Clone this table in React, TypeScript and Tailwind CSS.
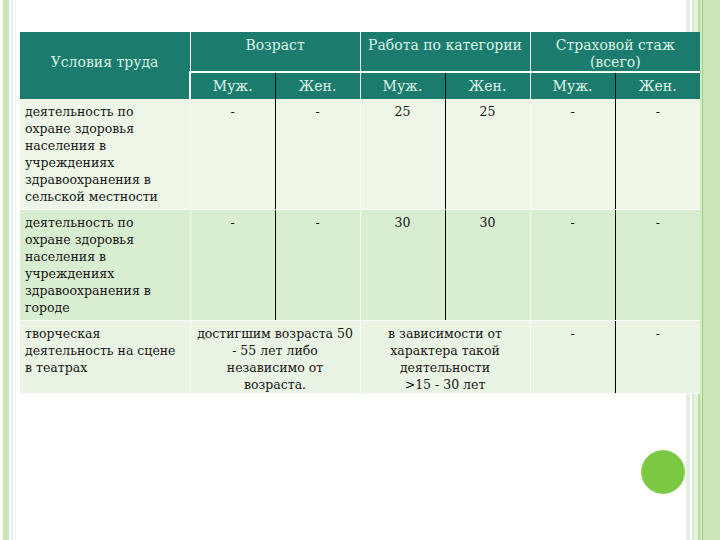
import React from "react";

const HEAD = "bg-[#1b7b6d] text-[#dcf3e8] font-normal";
const BODY_TEXT = "text-[12.5px] leading-[17px] text-[#161616]";

interface Row {
    label: string[];
    bg: string;
    cells: React.ReactNode;
}

function Dash() {
    return <span>-</span>;
}

// Value cell: top aligned, centred, thin light border on the left.
function V({ children, black = false, span = 1 }: { children: React.ReactNode; black?: boolean; span?: number }) {
    return (
        <td
            colSpan={span}
            className={
                "align-top text-center px-1 pt-[4px] border-b border-b-white/80 " +
                (black ? "border-l border-l-black" : "border-l border-l-white/80")
            }
        >
            {children}
        </td>
    );
}

const rows: Row[] = [
    {
        label: [
            "деятельность по",
            "охране здоровья",
            "населения в",
            "учреждениях",
            "здравоохранения в",
            "сельской местности",
        ],
        bg: "bg-[#eef6e8]",
        cells: (
            <>
                <V><Dash /></V>
                <V black><Dash /></V>
                <V>25</V>
                <V black>25</V>
                <V><Dash /></V>
                <V black><Dash /></V>
            </>
        ),
    },
    {
        label: [
            "деятельность по",
            "охране здоровья",
            "населения в",
            "учреждениях",
            "здравоохранения в",
            "городе",
        ],
        bg: "bg-[#d9edd0]",
        cells: (
            <>
                <V><Dash /></V>
                <V black><Dash /></V>
                <V>30</V>
                <V black>30</V>
                <V><Dash /></V>
                <V black><Dash /></V>
            </>
        ),
    },
    {
        label: ["творческая", "деятельность на сцене", "в театрах"],
        bg: "bg-[#eaf4e4]",
        cells: (
            <>
                <V span={2}>
                    достигшим возраста 50
                    <br />- 55 лет либо
                    <br />
                    независимо от
                    <br />
                    возраста.
                </V>
                <V span={2}>
                    в зависимости от
                    <br />
                    характера такой
                    <br />
                    деятельности
                    <br />
                    &gt;15 - 30 лет
                </V>
                <V><Dash /></V>
                <V black><Dash /></V>
            </>
        ),
    },
];

export default function App() {
    return (
        <div className="relative w-[720px] h-[540px] overflow-hidden pt-[32px] pl-[20px] font-['DejaVu_Serif',serif] bg-[linear-gradient(to_right,#fff_0px,#fff_3px,#cbe4b6_3px,#cbe4b6_9px,#fff_9px,#fff_11px,#def3f6_11px,#def3f6_13px,#fff_13px,#fff_15px,#fbeedd_15px,#fbeedd_16px,#fff_16px,#fff_686px,#e3efdf_686px,#e3efdf_690px,#fff_690px,#fff_692px,#d9ebd1_692px,#d9ebd1_694px,#e4f1de_694px,#e4f1de_698px,#b9dca4_698px,#b9dca4_700px,#d4eac8_700px,#d4eac8_702px,#9ccf7c_702px,#9ccf7c_703px,#cce6bc_703px,#cce6bc_720px)]">
            <table className="table-fixed border-collapse w-[680px]">
                <colgroup>
                    <col className="w-[170px]" />
                    <col className="w-[85px]" />
                    <col className="w-[85px]" />
                    <col className="w-[85px]" />
                    <col className="w-[85px]" />
                    <col className="w-[85px]" />
                    <col className="w-[85px]" />
                </colgroup>
                <thead className="text-[14px] leading-[17px]">
                    <tr className="h-[40px]">
                        <th rowSpan={2} className={HEAD + " align-middle text-center pb-[6px]"}>
                            Условия труда
                        </th>
                        <th colSpan={2} className={HEAD + " align-top pt-[5px] border-l border-l-white border-b-2 border-b-white"}>
                            Возраст
                        </th>
                        <th colSpan={2} className={HEAD + " align-top pt-[5px] border-l border-l-white border-b-2 border-b-white"}>
                            Работа по категории
                        </th>
                        <th colSpan={2} className={HEAD + " align-top pt-[5px] border-l border-l-white border-b-2 border-b-white"}>
                            Страховой стаж
                            <br />
                            (всего)
                        </th>
                    </tr>
                    <tr className="h-[27px]">
                        <th className={HEAD + " border-l-2 border-l-white"}>Муж.</th>
                        <th className={HEAD + " border-l border-l-black"}>Жен.</th>
                        <th className={HEAD + " border-l border-l-white"}>Муж.</th>
                        <th className={HEAD + " border-l border-l-black"}>Жен.</th>
                        <th className={HEAD + " border-l border-l-white"}>Муж.</th>
                        <th className={HEAD + " border-l border-l-black"}>Жен.</th>
                    </tr>
                </thead>
                <tbody className={BODY_TEXT}>
                    {rows.map((r, i) => (
                        <tr key={i} className={r.bg}>
                            <td className="align-top text-left pl-[5px] pt-[4px] pb-[4px] border-b border-b-white/80">
                                {r.label.map((l, j) => (
                                    <div key={j} className="whitespace-nowrap">{l}</div>
                                ))}
                            </td>
                            {r.cells}
                        </tr>
                    ))}
                </tbody>
            </table>
            <div className="absolute left-[641px] top-[450px] w-[44px] h-[44px] rounded-full bg-[#7bc943] border border-[#8bcf5a]" />
        </div>
    );
}
